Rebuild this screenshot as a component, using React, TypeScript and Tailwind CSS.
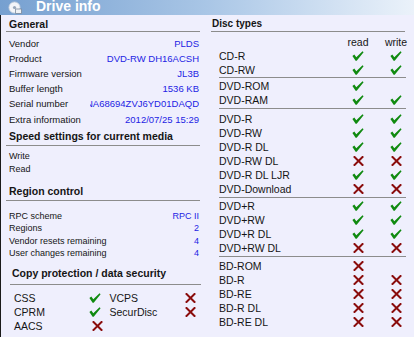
import React from "react";

type Mark = "y" | "n" | "";

function Check() {
  return (
    <svg width="12" height="10" viewBox="0 0 12 10">
      <path d="M0.4 4.9 L2.3 3.6 L4.3 6.3 L10.5 0.2 L11.6 1.2 L4.7 9.7 L3.6 9.7 Z" fill="#108a10" />
    </svg>
  );
}

function Cross() {
  return (
    <svg width="11" height="10" viewBox="0 0 11 10">
      <path d="M1.5 1 L9.5 9 M9.5 1 L1.5 9" stroke="#8a0c0c" strokeWidth="2" strokeLinecap="square" />
    </svg>
  );
}

function Icon({ m }: { m: Mark }) {
  if (m === "y") return <Check />;
  if (m === "n") return <Cross />;
  return null;
}

const general = [
  ["Vendor", "PLDS"],
  ["Product", "DVD-RW DH16ACSH"],
  ["Firmware version", "JL3B"],
  ["Buffer length", "1536 KB"],
];

const region = [
  ["RPC scheme", "RPC II"],
  ["Regions", "2"],
  ["Vendor resets remaining", "4"],
  ["User changes remaining", "4"],
];

const groups: { cls: string; rows: [string, Mark, Mark][] }[] = [
  {
    cls: "border-b border-[#8c8c8c]",
    rows: [
      ["CD-R", "y", "y"],
      ["CD-RW", "y", "y"],
    ],
  },
  {
    cls: "pt-[1px] pb-[1px] border-b border-[#8c8c8c]",
    rows: [
      ["DVD-ROM", "y", ""],
      ["DVD-RAM", "y", "y"],
    ],
  },
  {
    cls: "pt-[3px] pb-[1px] border-b border-[#8c8c8c]",
    rows: [
      ["DVD-R", "y", "y"],
      ["DVD-RW", "y", "y"],
      ["DVD-R DL", "y", "y"],
      ["DVD-RW DL", "n", "n"],
      ["DVD-R DL LJR", "y", "y"],
      ["DVD-Download", "n", "n"],
    ],
  },
  {
    cls: "pt-[1px] pb-[1px] border-b border-[#8c8c8c]",
    rows: [
      ["DVD+R", "y", "y"],
      ["DVD+RW", "y", "y"],
      ["DVD+R DL", "y", "y"],
      ["DVD+RW DL", "n", "n"],
    ],
  },
  {
    cls: "pt-[2px]",
    rows: [
      ["BD-ROM", "n", ""],
      ["BD-R", "n", "n"],
      ["BD-RE", "n", "n"],
      ["BD-R DL", "n", "n"],
      ["BD-RE DL", "n", "n"],
    ],
  },
];

export default function App() {
  return (
    <div className="w-[414px] h-[337px] overflow-hidden bg-[#efeffd] text-[#151515] font-['Liberation_Sans',Arial,sans-serif] flex flex-col">
      {/* title bar */}
      <div className="h-[15px] shrink-0 bg-linear-to-r from-[#76a0d0] via-[#a9c6e6] to-[#ebf2fa] flex items-start overflow-hidden">
        <svg className="ml-[8px] mt-[1px]" width="14" height="13" viewBox="0 0 14 13">
          <circle cx="6.5" cy="6.5" r="5.6" fill="#f3f5f9" stroke="#c3cedb" strokeWidth="0.8" />
          <circle cx="6.5" cy="6.5" r="1.6" fill="#97a6b9" />
          <rect x="7.6" y="8" width="5.8" height="4.4" fill="#eef1f5" stroke="#7b8a9d" strokeWidth="0.8" />
        </svg>
        <span className="ml-[14px] -mt-[1px] text-[14px] leading-[14px] font-bold text-white">Drive info</span>
      </div>

      <div className="flex flex-1 min-h-0">
        {/* left panel */}
        <div className="w-[200px] shrink-0 border-l border-[#1a1a1a] flex flex-col">
          <div className="mt-[2px] ml-[5px] border-b border-[#8c8c8c] pl-[3px] text-[10.5px] leading-[14px] font-bold">
            General
          </div>
          <div className="mt-[4px] ml-[5px] pl-[3px] pr-[1px] text-[9.5px]">
            {general.map(([k, v]) => (
              <div key={k} className="h-[15px] leading-[15px] flex justify-between">
                <span>{k}</span>
                <span className="text-[#2323e4]">{v}</span>
              </div>
            ))}
            <div className="h-[15px] leading-[15px] flex">
              <span className="w-[81px] shrink-0">Serial number</span>
              <div className="flex-1 min-w-0 overflow-hidden flex justify-end whitespace-nowrap">
                <span className="text-[#2323e4]">NA68694ZVJ6YD01DAQD</span>
              </div>
            </div>
            <div className="mt-[1px] h-[15px] leading-[15px] flex justify-between">
              <span>Extra information</span>
              <span className="text-[#2323e4]">2012/07/25 15:29</span>
            </div>
          </div>

          <div className="mt-[2px] ml-[5px] pb-[2px] border-b border-[#8c8c8c] pl-[3px] text-[10.5px] leading-[14px] font-bold whitespace-nowrap">
            Speed settings for current media
          </div>
          <div className="mt-[4px] ml-[5px] pl-[3px] text-[9px]">
            <div className="h-[13px] leading-[13px]">Write</div>
            <div className="h-[13px] leading-[13px]">Read</div>
          </div>

          <div className="mt-[8px] ml-[5px] pb-[2px] border-b border-[#8c8c8c] pl-[3px] text-[10.5px] leading-[14px] font-bold">
            Region control
          </div>
          <div className="mt-[8.5px] ml-[5px] pl-[3px] pr-[1px] text-[9px]">
            {region.map(([k, v]) => (
              <div key={k} className="h-[12.5px] leading-[12.5px] flex justify-between">
                <span>{k}</span>
                <span className="text-[#2323e4]">{v}</span>
              </div>
            ))}
          </div>

          <div className="mt-[6.5px] ml-[9px] -mr-[1px] pb-[4px] border-b border-[#8c8c8c] pl-[2px] text-[10.5px] leading-[14px] font-bold whitespace-nowrap">
            Copy protection / data security
          </div>
          <div className="mt-[6px] ml-[13px] text-[10.5px]">
            <div className="h-[14px] leading-[14px] flex items-center">
              <span className="w-[73px]">CSS</span>
              <span className="w-[20px] flex justify-center"><Check /></span>
              <span className="ml-[5px] w-[73px]">VCPS</span>
              <span className="w-[20px] flex justify-center"><Cross /></span>
            </div>
            <div className="h-[14px] leading-[14px] flex items-center">
              <span className="w-[73px]">CPRM</span>
              <span className="w-[20px] flex justify-center"><Check /></span>
              <span className="ml-[5px] w-[73px]">SecurDisc</span>
              <span className="w-[20px] flex justify-center"><Cross /></span>
            </div>
            <div className="h-[14px] leading-[14px] flex items-center">
              <span className="w-[73px]">AACS</span>
              <span className="w-[20px] flex justify-center"><Cross /></span>
            </div>
          </div>
        </div>

        {/* right panel */}
        <div className="flex-1 flex flex-col">
          <div className="mt-[2px] ml-[11px] mr-[9px] border-b border-[#8c8c8c] pl-[1px] text-[10px] leading-[14px] font-bold">
            Disc types
          </div>
          <div className="mt-[3px] ml-[19px] mr-[8px] text-[10.5px]">
            <div className="h-[14px] leading-[14px] flex">
              <span className="flex-1" />
              <span className="w-[20px] flex justify-center whitespace-nowrap">read</span>
              <span className="ml-[18px] w-[20px] flex justify-center whitespace-nowrap">write</span>
            </div>
            {groups.map((g, i) => (
              <div key={i} className={g.cls}>
                {g.rows.map(([name, r, w]) => (
                  <div key={name} className="h-[14px] leading-[14px] flex items-center">
                    <span className="flex-1">{name}</span>
                    <span className="w-[20px] flex justify-center"><Icon m={r} /></span>
                    <span className="ml-[18px] w-[20px] flex justify-center"><Icon m={w} /></span>
                  </div>
                ))}
              </div>
            ))}
          </div>
        </div>
      </div>
    </div>
  );
}
